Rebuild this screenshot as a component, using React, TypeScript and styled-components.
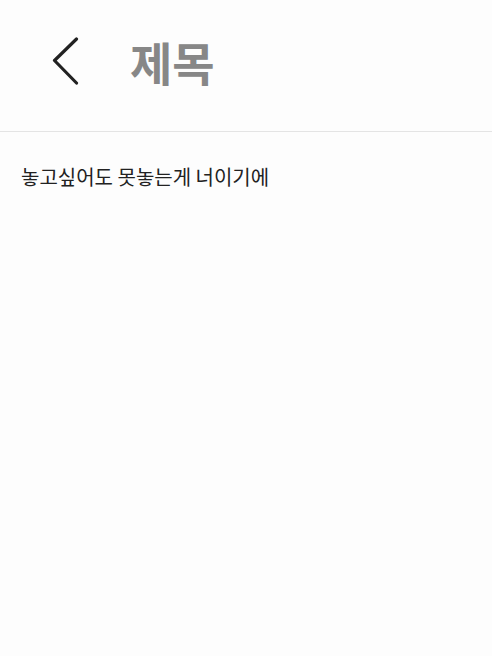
import React from "react";
import styled, { createGlobalStyle } from "styled-components";

const GlobalStyle = createGlobalStyle`
  html, body {
    margin: 0;
    padding: 0;
    background: #fdfdfd;
  }
  body {
    font-family: "Noto Sans CJK KR", "Noto Sans", sans-serif;
  }
`;

const Screen = styled.div`
  width: 492px;
  min-height: 656px;
  background: #fdfdfd;
  display: flex;
  flex-direction: column;
`;

const Header = styled.header`
  height: 132px;
  box-sizing: border-box;
  padding: 0 0 10px 52px;
  display: flex;
  align-items: center;
  gap: 50px;
  border-bottom: 1px solid #e4e4e4;
`;

const BackButton = styled.button`
  width: 28px;
  height: 48px;
  padding: 0;
  border: none;
  background: transparent;
  display: flex;
  align-items: center;
  justify-content: center;
  cursor: pointer;
`;

const Title = styled.h1`
  margin: 0;
  font-family: "Noto Sans CJK KR", sans-serif;
  font-size: 46px;
  font-weight: 700;
  color: #878787;
  line-height: 1;
`;

const Body = styled.main`
  padding: 31px 21px;
`;

const Content = styled.p`
  margin: 0;
  font-family: "Noto Sans CJK KR", sans-serif;
  font-size: 20px;
  line-height: 1.4;
  color: #222;
`;

export default function App() {
  return (
    <>
      <GlobalStyle />
      <Screen>
        <Header>
          <BackButton aria-label="뒤로">
            <svg width="28" height="48" viewBox="0 0 28 48">
              <polyline
                points="24.5,2 2.5,23.5 24.5,46"
                fill="none"
                stroke="#222"
                strokeWidth="3.2"
                strokeLinecap="round"
                strokeLinejoin="round"
              />
            </svg>
          </BackButton>
          <Title>제목</Title>
        </Header>
        <Body>
          <Content>놓고싶어도 못놓는게 너이기에</Content>
        </Body>
      </Screen>
    </>
  );
}
